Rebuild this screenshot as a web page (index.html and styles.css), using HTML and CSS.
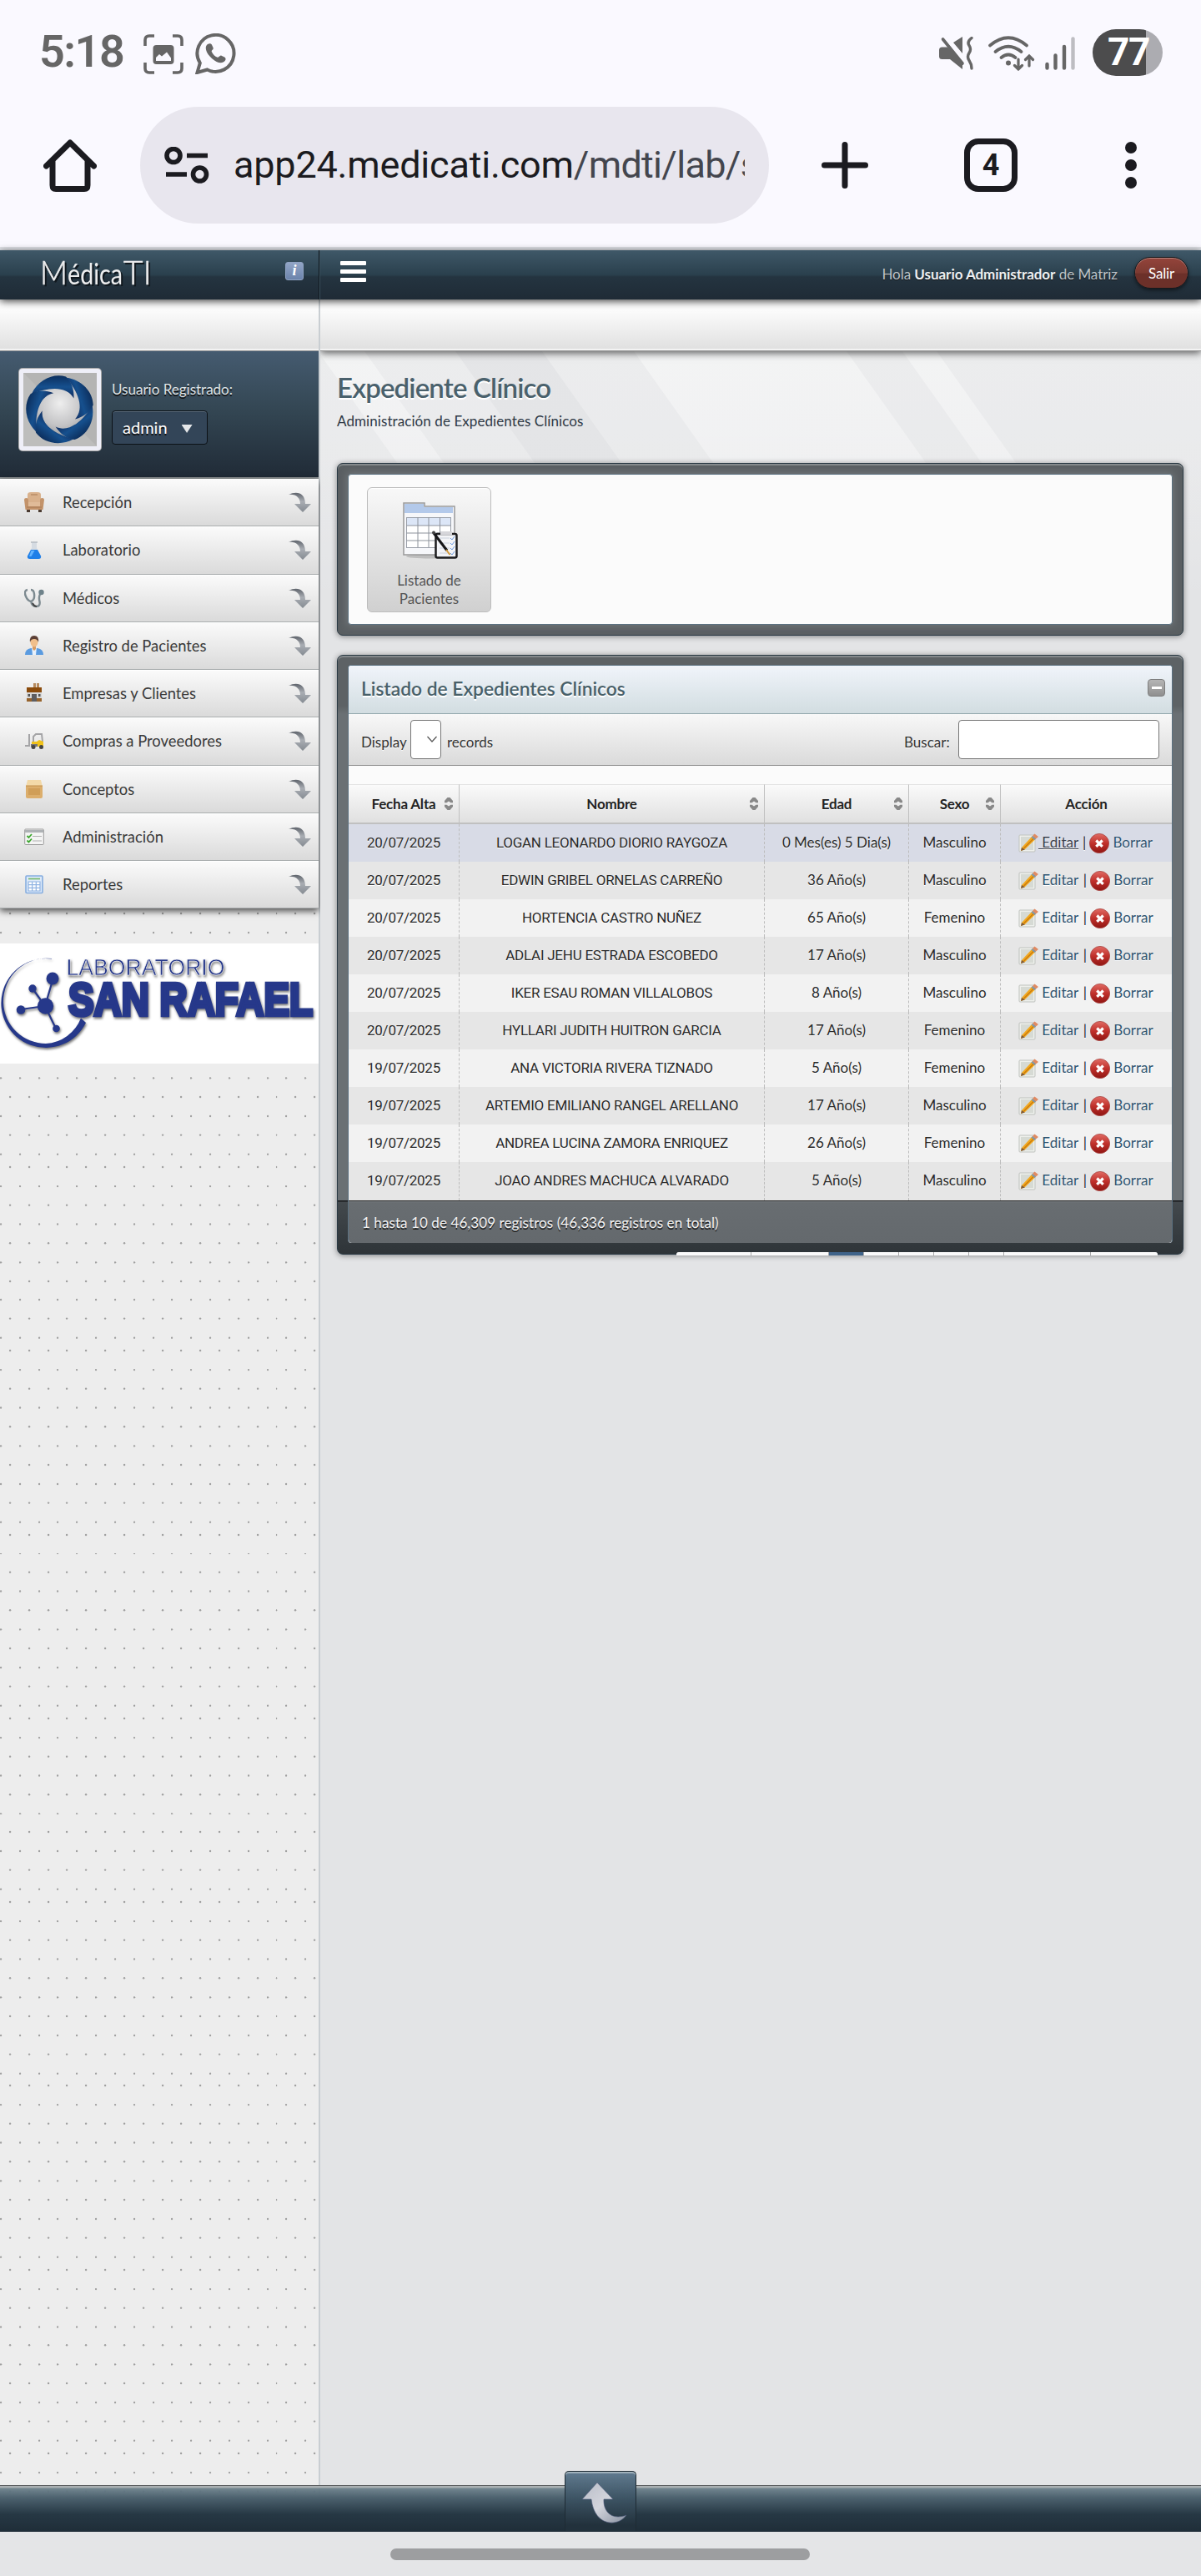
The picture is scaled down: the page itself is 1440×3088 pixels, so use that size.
FILE: index.html
```html
<!DOCTYPE html>
<html lang="es">
<head>
<meta charset="utf-8">
<title>MédicaTI</title>
<link rel="stylesheet" href="styles.css">
</head>
<body>
<svg class="defs" width="0" height="0" aria-hidden="true">
  <defs>
    <linearGradient id="gArrow" x1="0" y1="0" x2="0" y2="1"><stop offset="0" stop-color="#5f646c"/><stop offset=".45" stop-color="#a9adb3"/><stop offset="1" stop-color="#858b92"/></linearGradient>
    <linearGradient id="gBlue" x1="0" y1="0" x2="0" y2="1"><stop offset="0" stop-color="#0c2f5e"/><stop offset=".5" stop-color="#16508e"/><stop offset="1" stop-color="#102d60"/></linearGradient>
    <radialGradient id="gOrb" cx=".5" cy=".4" r=".6"><stop offset="0" stop-color="#eee"/><stop offset=".6" stop-color="#c3c3c5"/><stop offset="1" stop-color="#8f9092"/></radialGradient>
    <linearGradient id="gRed" x1="0" y1="0" x2="0" y2="1"><stop offset="0" stop-color="#e06b64"/><stop offset=".5" stop-color="#c0302b"/><stop offset="1" stop-color="#8f1512"/></linearGradient>
    <linearGradient id="gUp" x1="0" y1="0" x2="1" y2="1"><stop offset="0" stop-color="#b9bdc8"/><stop offset=".5" stop-color="#d3d5dc"/><stop offset="1" stop-color="#8890a0"/></linearGradient>
    <symbol id="down" viewBox="0 0 27 24"><path d="M0 3C10-2 20 1 20 14h7L17 24 7 14h7C14 7 9 2 0 3z" fill="url(#gArrow)"/></symbol>
    <symbol id="sort" viewBox="0 0 10 15"><path d="M0 6.300V4L3.500 0h3L10 4v2.300H7.500L5 4.600 2.500 6.300zM0 8.700V11l3.500 4h3L10 11V8.700H7.500L5 10.400 2.500 8.700z" fill="#888"/></symbol>
    <symbol id="edit" viewBox="0 0 24 24"><rect x="1" y="2" width="19" height="20" rx="1" fill="#eef0ec" stroke="#bfc2be"/><rect x="3" y="4" width="15" height="16" fill="#d6dad4"/><path d="M4 17L17 3l4 3.500L8 19l-5 2z" fill="#f2a81d"/><path d="M6.500 18L19.500 5" stroke="#c97a10" stroke-width="1.200"/><path d="M3 21l1-4 4 2.500z" fill="#7d5a3a"/><path d="M17 3l2.500-2.500L24 4l-3 2.500z" fill="#e08a62"/><path d="M15.500 4.500L17 3l4 3.500-1.500 1.500z" fill="#7f96ac"/></symbol>
    <symbol id="del" viewBox="0 0 24 24"><circle cx="12" cy="12" r="11.600" fill="url(#gRed)" stroke="#a84440" stroke-width=".8"/><path d="M8.300 8.500l7.400 7.400m0-7.400l-7.400 7.400" stroke="#fff" stroke-width="3.200"/></symbol>
  </defs>
</svg>

<header class="status">
  <span class="clock">5:18</span>
  <svg class="s-shot" viewBox="0 0 48 48" width="48" height="48"><path d="M2 14V7q0-5 5-5h6M35 2h6q5 0 5 5v7M46 34v7q0 5-5 5h-6M13 46H7q-5 0-5-5v-7" fill="none" stroke="#666" stroke-width="3.600"/><rect x="11.500" y="13" width="25" height="23" rx="4" fill="#666"/><path d="M15 32v-4l4-4 3 2.500 6-5 5 7v3.500z" fill="#faf9ff"/></svg>
  <svg class="s-wa" viewBox="0 0 49 49" width="49" height="49"><path d="M2.500 47l3.300-11.500A22 22 0 1 1 14.500 43.500z" fill="none" stroke="#666" stroke-width="4"/><path d="M16.500 12.500c-5 1-5.500 8 1.500 15.500s14.500 9.500 18 4.500c.8-1.500.8-3-.8-4l-3.700-1.800c-1.800-.6-2.800 2.600-4.800 2-3.200-1.300-6-4.300-7-7-.3-1.700 2.800-2 1.900-4.500l-1.700-3.700c-.7-1-2-1.400-3.400-1z" fill="#666"/></svg>
  <span class="spacer"></span>
  <svg class="s-mute" viewBox="0 0 42 40" width="42" height="40"><path d="M28 0v20L17 7zM0 16q0-3.500 3.500-3.500H10L28 30v9L13 27H3.500Q0 27 0 23.500z" fill="#666"/><path d="M4.500 3L28 32" stroke="#666" stroke-width="3.600" stroke-linecap="round"/><path d="M12 6.500l18 22" stroke="#faf9ff" stroke-width="2.400"/><path d="M39 1.500q-6 4.500-3 9t0 9 0 9 3 9.500" fill="none" stroke="#666" stroke-width="3.400" stroke-linecap="round"/></svg>
  <svg class="s-wifi" viewBox="0 0 56 42" width="56" height="42"><g fill="none" stroke="#666" stroke-width="3.700" stroke-linecap="round"><path d="M2 11.500Q24-7 46 11.500M8.500 19Q24 6.500 39.500 19M15.500 26Q24 19 32.500 26"/><path d="M36 28v12m-4.500-4.500L36 40l4.500-4.500M49 36V24m-4.500 4.500L49 24l4.500 4.500" stroke-width="3.200"/></g><circle cx="24" cy="32.500" r="3" fill="#666"/></svg>
  <svg class="s-sig" viewBox="0 0 36 40" width="36" height="40"><g stroke-width="4.400" stroke-linecap="round" stroke="#666"><path d="M2.500 33v4.500M12.500 22.500v15M23 12v25.500"/><path d="M33.500 2.500v35" stroke="#bdbdc2"/></g></svg>
  <span class="battery">77</span>
</header>

<div class="browser">
  <svg class="b-home" viewBox="0 0 64 64" width="64" height="64"><path d="M3.500 33L32 5l28.500 28M11 27v29q0 4.500 4 4.500h34q4 0 4-4.500V27" fill="none" stroke="#1b1b20" stroke-width="7" stroke-linejoin="round" stroke-linecap="round"/></svg>
  <div class="url">
    <svg viewBox="0 0 54 44" width="54" height="44"><g fill="none" stroke="#1b1b20" stroke-width="5.600"><circle cx="11" cy="10.500" r="8"/><circle cx="42.500" cy="33" r="8"/><path d="M27 10.500h25M2 33h25"/></g></svg>
    <span class="address">app24.medicati.com<i>/mdti/lab/s</i></span>
  </div>
  <svg class="b-plus" viewBox="0 0 56 56" width="56" height="56"><path d="M28 3.500v49M3.500 28h49" stroke="#1b1b20" stroke-width="7" stroke-linecap="round"/></svg>
  <span class="tabs">4</span>
  <svg class="b-dots" viewBox="0 0 14 56" width="14" height="56"><g fill="#1b1b20"><circle cx="7" cy="7" r="7"/><circle cx="7" cy="28" r="7"/><circle cx="7" cy="49" r="7"/></g></svg>
</div>

<div class="app">
  <div class="topbar">
    <div class="brand">
      <svg class="wordmark" viewBox="0 0 134 36" width="134" height="36"><g class="wm"><text class="thin" x="-1" y="28" font-size="40" textLength="33" lengthAdjust="spacingAndGlyphs">M</text><text x="32" y="28" font-size="34" textLength="66" lengthAdjust="spacingAndGlyphs">édica</text><text class="thin" x="99" y="28" font-size="40" textLength="34" lengthAdjust="spacingAndGlyphs">TI</text></g></svg>
      <span class="info">i</span>
    </div>
    <div class="topmain">
      <span class="burger"><b></b><b></b><b></b></span>
      <span class="hello">Hola <strong>Usuario Administrador</strong> de Matriz</span>
      <span class="exit">Salir</span>
    </div>
  </div>

  <div class="columns">
    <aside class="side">
      <div class="strip"></div>
      <div class="user">
        <svg class="avatar" viewBox="0 0 88 88" width="88" height="88"><rect width="88" height="88" fill="#b4b4b3"/><path d="M0 0l88 88H0z" fill="#bdbdbc"/><circle cx="44" cy="44" r="37" fill="url(#gOrb)"/>
          <g fill="url(#gBlue)">
            <path id="bl" d="M10 25C18 8 36 0 51 4.500c7 6 10 16 9.500 26C52 15 30 17 10 25z"/>
            <use href="#bl" transform="rotate(72 44 44)"/><use href="#bl" transform="rotate(144 44 44)"/><use href="#bl" transform="rotate(216 44 44)"/><use href="#bl" transform="rotate(288 44 44)"/>
          </g></svg>
        <div class="who"><span>Usuario Registrado:</span><div class="admin">admin<i></i></div></div>
      </div>
      <ul class="menu">
        <li><svg viewBox="0 0 24 24"><path d="M3 21h4v3H3zM17 21h4v3h-4z" fill="#4a3a30"/><path d="M4 3q0-3 4-3h8q4 0 4 3v9H4z" fill="#d9b18c"/><path d="M0 9q0-2 2.500-2T5 10v5h14v-5q0-3 2.500-3T24 9l-1.500 12h-21z" fill="#c3936a"/><path d="M5 12h14v5H5z" fill="#e0bb98"/><path d="M8 3h8M3 18h18" stroke="#a87a55" fill="none"/></svg>Recepción<svg class="go"><use href="#down"/></svg></li>
        <li><svg viewBox="0 0 24 24"><path d="M9 3h6v7l5 9q1 4-3 4H7q-4 0-3-4l5-9z" fill="#d5dbe2"/><path d="M8 12h8l4 7.500q.8 3.500-3 3.500H7q-3.800 0-3-3.500z" fill="#1f7fe8"/><path d="M8.500 13h4l-4 7H6z" fill="#63b4ff"/><path d="M8 3h8" stroke="#b5bbc2" stroke-width="1.500"/></svg>Laboratorio<svg class="go"><use href="#down"/></svg></li>
        <li><svg viewBox="0 0 24 24"><path d="M4 2Q-1 3 2 10q2 5 6 6 5-2 4-9-.5-5-4-5M8 15q1 7 6.500 7 5 0 4-6-2-8 3-11" fill="none" stroke="#7d8a90" stroke-width="2.400"/><circle cx="20.500" cy="5" r="3.200" fill="#6e828a"/><path d="M10 18q2 4 5 4" stroke="#444" stroke-width="2" fill="none"/></svg>Médicos<svg class="go"><use href="#down"/></svg></li>
        <li><svg viewBox="0 0 24 24"><path d="M1 23q0-7 7-8h8q7 1 7 8z" fill="#5a9be0"/><path d="M9 14h6l-1 9h-4z" fill="#e8f1fb"/><path d="M10 11h4v5l-2 2-2-2z" fill="#d69a63"/><ellipse cx="12" cy="7.500" rx="4.500" ry="6" fill="#f0bf8c"/><path d="M7 8q-1-8 5-8t5 8q-1-4-5-4T7 8z" fill="#5b3f35"/></svg>Registro de Pacientes<svg class="go"><use href="#down"/></svg></li>
        <li><svg viewBox="0 0 24 24"><path d="M11 0h3v6h-3zM15 0h3v6h-3z" fill="#b58a5e"/><path d="M3 5h18v6H3z" fill="#8a4b0c"/><path d="M3 11h18v11H3z" fill="#d8d8d8"/><path d="M3 18h18v4H3z" fill="#96632c"/><path d="M9 13h6v9H9z" fill="#5d5d60"/><path d="M4.500 13H7v3H4.500zM17 13h2.500v3H17z" fill="#555"/></svg>Empresas y Clientes<svg class="go"><use href="#down"/></svg></li>
        <li><svg viewBox="0 0 24 24"><path d="M6 4v14H1M11 14V7l3-3h7l1 9" fill="none" stroke="#a4a4a6" stroke-width="2"/><path d="M9 13h6l3-2 5 2v6H9z" fill="#f0c21a"/><path d="M8 16h8v3H8z" fill="#777"/><circle cx="11" cy="19.500" r="2.500" fill="#444"/><circle cx="20.500" cy="19.500" r="2.500" fill="#444"/></svg>Compras a Proveedores<svg class="go"><use href="#down"/></svg></li>
        <li><svg viewBox="0 0 24 24"><path d="M4 1h16l2 8H2z" fill="#f3d9a8"/><path d="M2 8h20v13q0 2-2 2H4q-2 0-2-2z" fill="#dcae6c"/><path d="M5 11h14v8H5z" fill="#d09e58"/><path d="M2 8h20" stroke="#c08f4c"/></svg>Conceptos<svg class="go"><use href="#down"/></svg></li>
        <li><svg viewBox="0 0 24 24"><rect x=".7" y="3" width="22.600" height="18.500" rx="1" fill="#f4f4f4" stroke="#999"/><path d="M1 4h22v3H1z" fill="#aeb2b5"/><path d="M3.500 11l2 2 3.500-4M3.500 16.500l2 2L9 14.500" stroke="#3aa62c" stroke-width="1.800" fill="none"/><path d="M10 11.500h11M10 17h11" stroke="#b0b0b0" stroke-width="1.200"/></svg>Administración<svg class="go"><use href="#down"/></svg></li>
        <li><svg viewBox="0 0 24 24"><rect x="2" y="2" width="20" height="20.500" rx="1" fill="#dce9f9" stroke="#85addf" stroke-width="1.600"/><path d="M5 5.500h14" stroke="#74b86a" stroke-width="1.600"/><path d="M5 9h14v11H5z" fill="#fff"/><path d="M5 9h14v11H5zM5 12.600h14M5 16.300h14M9.600 9v11M14.300 9v11" stroke="#8fb3e2" stroke-width="1.200" fill="none"/></svg>Reportes<svg class="go"><use href="#down"/></svg></li>
      </ul>
      <div class="lab">
        <svg viewBox="0 0 382 144" width="382" height="144">
          <g class="labshadow" fill="#26388a">
            <path d="M62 18.500A53.500 53.500 0 1 0 103 95l-6-5.500A48 48 0 0 1 55 120 51 51 0 0 1 4 71 52 52 0 0 1 62 18z"/>
            <path d="M54 75L39 54M54 75l10-34M54 75l-29 4M54 75l13 27" stroke="#26388a" stroke-width="2.200"/>
            <circle cx="54.500" cy="75" r="9.700"/><circle cx="63" cy="42" r="7.500"/><circle cx="39" cy="54" r="4.700"/><circle cx="25" cy="79.500" r="5.300"/><circle cx="67.500" cy="102" r="4.300"/>
            <text class="lab1" x="79.500" y="38" font-size="27" textLength="190" lengthAdjust="spacingAndGlyphs">LABORATORIO</text>
            <text class="lab2" x="82" y="85.500" font-size="55" textLength="293" lengthAdjust="spacingAndGlyphs">SAN RAFAEL</text>
          </g>
        </svg>
      </div>
    </aside>

    <main class="main">
      <div class="strip"></div>
      <svg class="rays" viewBox="0 0 1056 300" width="1056" height="300" preserveAspectRatio="none"><defs><linearGradient id="fade" gradientUnits="userSpaceOnUse" x1="0" y1="0" x2="0" y2="300"><stop offset="0" stop-color="#fff" stop-opacity=".55"/><stop offset=".4" stop-color="#fff" stop-opacity=".45"/><stop offset="1" stop-color="#fff" stop-opacity="0"/></linearGradient></defs>
        <g fill="url(#fade)"><path d="M0 0H162L375 300H0z" opacity=".5"/><path d="M0 0H53L266 300H210L0 4z" opacity=".7"/><path d="M266 0H1056V300H479z" opacity=".5"/><path d="M376 0H631L844 300H589zM698 0H739L952 300H911z" opacity=".7"/></g></svg>
      <div class="heading"><h1>Expediente Clínico</h1><p>Administración de Expedientes Clínicos</p></div>

      <section class="panel shortcuts"><div class="inner">
        <div class="tile">
          <svg viewBox="0 0 66 68" width="66" height="68"><ellipse cx="34" cy="65" rx="30" ry="2.500" fill="#999" opacity=".5"/><path d="M1 1h25v4h36v58H1z" fill="#f6f7fa" stroke="#999" stroke-width="1.500"/><path d="M2 2h23v4h35v7H2z" fill="#b3c9ea"/><rect x="4.500" y="18.500" width="53" height="36" fill="#fff" stroke="#9a9fa8"/><rect x="5" y="19" width="52" height="9" fill="#dce6f7"/><path d="M4.500 28h53M4.500 37h53M4.500 46h53M18 18v36M31 18v36M44.500 18v36" stroke="#8d929b"/><rect x="39.500" y="38" width="25" height="28.500" rx="2" fill="#f3f4f7" stroke="#1c1c1e" stroke-width="2.500"/><path d="M45 35h14v4H45z" fill="#d6d6da"/><path d="M44 43h12M44 49h12M44 55h12M44 61h12" stroke="#ccd2dd"/><path d="M57 43l2 2 3-4M57 49l2 2 3-4M57 55l2 2 3-4M57 61l2 2 3-4" fill="none" stroke="#6c9be0"/><path d="M37 37l16 21" stroke="#161618" stroke-width="3"/><path d="M52 57l4.500 6" stroke="#d39a3e" stroke-width="2"/><circle cx="37" cy="36.500" r="2" fill="#444"/></svg>
          <span>Listado de<br>Pacientes</span>
        </div>
      </div></section>

      <section class="panel list"><div class="inner">
        <div class="bar"><h2>Listado de Expedientes Clínicos</h2><span class="min"></span></div>
        <div class="tools">
          <span class="t1">Display</span><span class="select"><svg viewBox="0 0 12 8" width="12" height="8"><path d="M.5 1L6 7l5.500-6" fill="none" stroke="#555" stroke-width="1.200"/></svg></span><span class="t2">records</span>
          <span class="spacer"></span><span class="t3">Buscar:</span><span class="search"></span>
        </div>
        <table>
          <colgroup><col class="c1"><col class="c2"><col class="c3"><col class="c4"><col class="c5"></colgroup>
          <thead><tr><th>Fecha Alta<svg><use href="#sort"/></svg></th><th>Nombre<svg><use href="#sort"/></svg></th><th>Edad<svg><use href="#sort"/></svg></th><th>Sexo<svg><use href="#sort"/></svg></th><th>Acción</th></tr></thead>
          <tbody>
            <tr class="on"><td>20/07/2025</td><td>LOGAN LEONARDO DIORIO RAYGOZA</td><td>0 Mes(es) 5 Dia(s)</td><td>Masculino</td><td><div class="act"><svg><use href="#edit"/></svg><a>&nbsp;Editar</a><b>|</b><svg><use href="#del"/></svg><a>&nbsp;Borrar</a></div></td></tr>
            <tr><td>20/07/2025</td><td>EDWIN GRIBEL ORNELAS CARREÑO</td><td>36 Año(s)</td><td>Masculino</td><td><div class="act"><svg><use href="#edit"/></svg><a>&nbsp;Editar</a><b>|</b><svg><use href="#del"/></svg><a>&nbsp;Borrar</a></div></td></tr>
            <tr><td>20/07/2025</td><td>HORTENCIA CASTRO NUÑEZ</td><td>65 Año(s)</td><td>Femenino</td><td><div class="act"><svg><use href="#edit"/></svg><a>&nbsp;Editar</a><b>|</b><svg><use href="#del"/></svg><a>&nbsp;Borrar</a></div></td></tr>
            <tr><td>20/07/2025</td><td>ADLAI JEHU ESTRADA ESCOBEDO</td><td>17 Año(s)</td><td>Masculino</td><td><div class="act"><svg><use href="#edit"/></svg><a>&nbsp;Editar</a><b>|</b><svg><use href="#del"/></svg><a>&nbsp;Borrar</a></div></td></tr>
            <tr><td>20/07/2025</td><td>IKER ESAU ROMAN VILLALOBOS</td><td>8 Año(s)</td><td>Masculino</td><td><div class="act"><svg><use href="#edit"/></svg><a>&nbsp;Editar</a><b>|</b><svg><use href="#del"/></svg><a>&nbsp;Borrar</a></div></td></tr>
            <tr><td>20/07/2025</td><td>HYLLARI JUDITH HUITRON GARCIA</td><td>17 Año(s)</td><td>Femenino</td><td><div class="act"><svg><use href="#edit"/></svg><a>&nbsp;Editar</a><b>|</b><svg><use href="#del"/></svg><a>&nbsp;Borrar</a></div></td></tr>
            <tr><td>19/07/2025</td><td>ANA VICTORIA RIVERA TIZNADO</td><td>5 Año(s)</td><td>Femenino</td><td><div class="act"><svg><use href="#edit"/></svg><a>&nbsp;Editar</a><b>|</b><svg><use href="#del"/></svg><a>&nbsp;Borrar</a></div></td></tr>
            <tr><td>19/07/2025</td><td>ARTEMIO EMILIANO RANGEL ARELLANO</td><td>17 Año(s)</td><td>Masculino</td><td><div class="act"><svg><use href="#edit"/></svg><a>&nbsp;Editar</a><b>|</b><svg><use href="#del"/></svg><a>&nbsp;Borrar</a></div></td></tr>
            <tr><td>19/07/2025</td><td>ANDREA LUCINA ZAMORA ENRIQUEZ</td><td>26 Año(s)</td><td>Femenino</td><td><div class="act"><svg><use href="#edit"/></svg><a>&nbsp;Editar</a><b>|</b><svg><use href="#del"/></svg><a>&nbsp;Borrar</a></div></td></tr>
            <tr><td>19/07/2025</td><td>JOAO ANDRES MACHUCA ALVARADO</td><td>5 Año(s)</td><td>Masculino</td><td><div class="act"><svg><use href="#edit"/></svg><a>&nbsp;Editar</a><b>|</b><svg><use href="#del"/></svg><a>&nbsp;Borrar</a></div></td></tr>
          </tbody>
        </table>
        <div class="count">1 hasta 10 de 46,309 registros (46,336 registros en total)</div>
      </div>
      <div class="pager"><i></i><i></i><i class="cur"></i><i></i><i></i><i></i><i></i><i></i><i></i></div>
      </section>
    </main>
  </div>

  <div class="bottombar"><span class="totop"><svg viewBox="0 0 56 56" width="56" height="56"><path d="M20 3L39 23H28C27 36 36 49 55 42 46 56 17 57 13 23H2z" fill="url(#gUp)" stroke="#4b5878" stroke-width=".6"/></svg></span></div>
</div>
<div class="navbar"><span></span></div>
</body>
</html>
```
FILE: styles.css
```css
* { box-sizing: border-box; }
body { margin: 0; width: 1440px; height: 3088px; overflow: hidden; background: #e4e5e7; font: 17px/22px Lato, "Liberation Sans", sans-serif; color: #222; }
i { font-style: normal; }
.defs { position: absolute; }
.spacer { flex: 1; }

/* phone status bar */
.status { display: flex; height: 126px; padding: 35px 46px 0 47px; background: #faf9ff; }
.status svg { flex: none; }
.clock { width: 125px; font: 600 54px/54px Roboto, sans-serif; letter-spacing: -1.500px; color: #666; white-space: nowrap; }
.s-shot { margin-top: 6px; }
.s-wa { margin: 5px 0 0 14px; }
.s-mute { margin: 9px 17px 0 0; }
.s-wifi { margin: 8px 12px 0 0; }
.s-sig { margin: 9px 21px 0 0; }
.battery { width: 84px; height: 56px; border-radius: 28px; background: linear-gradient(90deg, #4c4c4d 64px, #acacb1 64px); color: #fff; font: 700 46px/55px Roboto, sans-serif; letter-spacing: -1.500px; padding-left: 18px; }

/* browser toolbar */
.browser { display: flex; align-items: flex-start; height: 174px; padding: 40px 77px 0 52px; background: #faf9ff; border-bottom: 4px solid #e1e3e8; }
.browser svg { flex: none; }
.url { display: flex; width: 754px; height: 140px; margin: -38px 63px 0 52px; border-radius: 70px; background: #e8e6ee; padding: 48px 28px 0 29px; }
.address { width: 613px; margin-left: 29px; overflow: hidden; white-space: nowrap; font: 400 45px/56px Roboto, sans-serif; letter-spacing: -.2px; color: #1b1b20; margin-top: -6px; }
.address i { color: #44464e; letter-spacing: -.7px; }
.b-plus { margin-top: 4px; }
.tabs { width: 64px; height: 64px; margin-left: 115px; border: 7px solid #1b1b20; border-radius: 17px; font: 700 36px/51px Roboto, sans-serif; text-align: center; color: #1b1b20; }
.b-dots { margin: 4px 0 0 129px; }

/* application frame */
.app { position: relative; height: 2735px; }
.topbar { position: relative; z-index: 2; display: flex; height: 59px; background: linear-gradient(#3f5868, #2a404d 50%, #243440 54%, #1f2b36); box-shadow: 0 2px 9px rgba(0, 0, 0, .75); }
.brand { display: flex; width: 382px; }
.wordmark { margin: 13px 0 0 49px; overflow: visible; }
.wm { font-family: Lato, sans-serif; fill: #ededee; filter: drop-shadow(2px 2px 0 #11181e); }
.thin { font-weight: 300; stroke: #ededee; stroke-width: .5px; }
.info { width: 22px; height: 22px; margin: 14px 0 0 159px; border-radius: 3px; border: 1px solid #8fa2c2; background: linear-gradient(#92a5c6, #6b83ab); color: #fff; text-align: center; font: italic bold 18px/19px "Liberation Serif", serif; }
.topmain { flex: 1; display: flex; border-left: 1px solid #0e161c; box-shadow: inset 1px 0 #3d5260; padding-left: 25px; }
.burger { display: flex; flex-direction: column; gap: 5px; padding-top: 13px; width: 31px; }
.burger b { height: 5px; border-radius: 1px; background: #fff; }
.hello { margin: 17px 20px 0 auto; line-height: 24px; letter-spacing: -.05px; color: #bcc4ca; text-shadow: 0 1px #111; }
.hello strong { color: #eef1f3; }
.exit { width: 65px; height: 38px; margin: 8px 15px 0 0; border: 1px solid #17191c; border-radius: 19px; background: linear-gradient(#94443b, #7c3a31 50%, #6c3029 54%); box-shadow: inset 0 1px #b9837d, 0 2px 4px rgba(0, 0, 0, .5); color: #fff; text-align: center; line-height: 38px; letter-spacing: -.2px; }
.columns { display: grid; grid-template-columns: 384px 1056px; height: 2676px; }
.strip { height: 62px; background: linear-gradient(#fcfcfc 20%, #dfdfdf); border-bottom: 1px solid #999; box-shadow: inset 0 -2px #f3f3f3; }

/* sidebar */
.side { border-right: 2px solid #c9ced2; background: #ededed url("data:image/svg+xml,%3Csvg xmlns='http://www.w3.org/2000/svg' width='22.83' height='220.3'%3E%3Cg fill='%23a0a0a0'%3E%3Ccircle cx='12' cy='2' r='1.200'/%3E%3Ccircle cx='1' cy='25' r='1.200'/%3E%3Ccircle cx='12' cy='47.500' r='1.200'/%3E%3Ccircle cx='1' cy='70.300' r='1.200'/%3E%3Ccircle cx='12' cy='93' r='1.200'/%3E%3Ccircle cx='1' cy='116' r='1.200'/%3E%3Ccircle cx='12' cy='138.500' r='1.200'/%3E%3Ccircle cx='1' cy='161.500' r='1.200'/%3E%3Ccircle cx='12' cy='184' r='1.200'/%3E%3Ccircle cx='1' cy='207' r='1.200'/%3E%3C/g%3E%3C/svg%3E") 0 156.8px; }
.user { display: flex; height: 153px; padding: 21px 23px 0; background: linear-gradient(#455b70, #344754 45%, #202b37); border-bottom: 2px solid #8f9496; }
.avatar { flex: none; box-sizing: content-box; border: 5px solid #efeff8; border-radius: 4px; box-shadow: 0 0 0 1px #a8a8a8; background: #efeff8; }
.who { padding: 14px 0 0 13px; color: #dfe3e6; text-shadow: 0 2px #111; white-space: nowrap; }
.admin { display: flex; align-items: center; gap: 17px; width: 115px; height: 41px; margin-top: 14px; padding: 0 0 1px 12px; border: 1px solid #0c1116; border-radius: 4px; background: #334558; box-shadow: inset 0 1px #5a6b7c; font-size: 20px; color: #fff; }
.admin i { width: 13px; height: 10px; margin-top: 4px; background: #e5e7e9; clip-path: polygon(0 0, 100% 0, 50% 100%); }
.menu { list-style: none; margin: 0; padding: 0; height: 515px; display: grid; grid-auto-rows: 57.25px; box-shadow: 0 3px 8px rgba(0, 0, 0, .7); }
.menu li { display: flex; align-items: center; padding: 0 9px 0 29px; background: linear-gradient(#fbfbfb, #dadada); border-bottom: 1px solid #a9adae; box-shadow: inset 0 1px #fff; font-size: 18.400px; color: #3a3a3a; }
.menu li svg:first-child { width: 24px; height: 24px; margin-right: 22px; }
.menu .go { width: 27px; height: 24px; margin: 0 0 0 auto; }
.lab { height: 144px; margin-top: 42px; background: #fff; }
.labshadow { filter: drop-shadow(1.500px 2px 1.500px rgba(0, 0, 0, .55)); }
.lab1 { font-family: "Liberation Sans", sans-serif; stroke: #fff; stroke-width: .5px; }
.lab2 { font-family: "Liberation Sans", sans-serif; font-weight: 700; stroke: #26388a; stroke-width: 4.500px; }

/* main column */
.main { position: relative; background: linear-gradient(#e5e6e8, #e3e4e6 300px); clip-path: inset(0); }
.main .strip { position: relative; z-index: 1; box-shadow: inset 0 -2px #f3f3f3, 0 2px 9px rgba(0, 0, 0, .65); }
.rays { position: absolute; left: 0; top: 62px; }
.heading { position: relative; height: 134px; padding: 23px 0 0 20px; }
h1 { margin: 0; font-size: 33px; line-height: 40px; font-weight: 600; letter-spacing: -.85px; color: #4a616c; text-shadow: 0 2px #fff; }
.heading p { margin: 9px 0 0; line-height: 24px; letter-spacing: .08px; color: #2f3945; }
.panel { position: relative; width: 1015px; margin: 0 0 23px 20px; padding: 12px; border: 1px solid #2b3a45; border-radius: 7px; background: #5d6265; box-shadow: inset 0 2px #84898c, inset 0 0 12px #565b5e, 0 1px 7px rgba(0, 0, 0, .45); }
.inner { width: 989px; border: 1px solid #5b7181; border-radius: 4px; background: #fbfbfb; box-shadow: 0 0 8px #777c80; overflow: hidden; }
.shortcuts { height: 207px; }
.shortcuts .inner { height: 181px; padding: 15px 22px; }
.tile { width: 149px; height: 150px; padding-top: 17px; border: 1px solid #bcbcbc; border-radius: 6px; background: linear-gradient(#f8f8f8, #d0d0d0); box-shadow: inset 0 1px #fff; text-align: center; color: #555; }
.tile svg { display: block; margin: 0 auto 15px 42px; }
.tile span { display: block; }
.list { height: 719px; padding-top: 11px; background: linear-gradient(#5d6265 60px, #6a7074 70px, #6a7074 653px, #151719 653px, #151719 654px, #43494d 655px, #2e3438 100%); box-shadow: inset 0 2px #84898c, 0 1px 7px rgba(0, 0, 0, .45); }
.list .inner { border-width: 1px 1px 0; box-shadow: none; }
.bar { display: flex; height: 58px; padding: 15px 8px 0 15px; background: linear-gradient(#f0f4fa, #d2dde1); border-bottom: 1px solid #93a8ad; }
h2 { margin: 0; font-size: 22.800px; line-height: 24px; font-weight: 600; color: #486069; text-shadow: 0 2px #fff; }
.min { width: 21px; height: 21px; margin: 1px 0 0 auto; border: 1px solid #7d7d7d; border-radius: 4px; background: linear-gradient(#fff, #fff) center / 12px 3px no-repeat, linear-gradient(#b5b5b5, #8f8f8f); }
.tools { display: flex; height: 62px; padding: 7px 15px 0 15px; background: linear-gradient(#f8f8f8, #dadada); border-bottom: 1px solid #8e8e8e; text-shadow: 0 1px #fff; }
.tools > span:not(.select):not(.search) { padding-top: 16px; color: #333; }
.t1 { width: 59px; }
.tools .t2 { padding-left: 7px; }
.t3 { width: 65px; }
.select { width: 37px; height: 47px; border: 1px solid #767676; border-radius: 4px; background: #fff; padding: 9px 0 0 19px; }
.search { width: 241px; height: 47px; border: 1px solid #767676; border-radius: 4px; background: #fff; }
table { width: 987px; margin-top: 22px; table-layout: fixed; border-collapse: separate; border-spacing: 0; }
.c1 { width: 133px; } .c2 { width: 366px; } .c3 { width: 173px; } .c4 { width: 110px; } .c5 { width: 205px; }
th { position: relative; height: 48px; padding: 0; background: linear-gradient(#fafafa, #e0e0e0); border: solid #c0c0c0; border-width: 1px 1px 2px 0; border-top-color: #e3e3e3; font-weight: 700; letter-spacing: -.2px; text-shadow: 0 1px #fff; }
th:last-child { border-right: 0; }
th svg { position: absolute; right: 7px; top: 15px; width: 10px; height: 15px; }
td { height: 45px; padding: 0 0 2px; text-align: center; background: #e6e6e6; border-right: 1px dashed #bcbcbc; font-family: Roboto, sans-serif; letter-spacing: -.25px; text-shadow: 0 1px #fff; color: #2a2a2a; white-space: nowrap; }
td:last-child { border-right: 0; }
tr:nth-child(odd) td { background: #f2f2f2; }
tbody tr:last-child td { height: 46px; }
tbody tr.on td { background: #d8dbe6; }
td:nth-child(3), td:nth-child(4) { font-family: Lato, sans-serif; letter-spacing: 0; }
.act { display: flex; align-items: center; padding-left: 21px; font-family: Lato, sans-serif; letter-spacing: 0; }
.act svg { width: 24px; height: 24px; flex: none; position: relative; top: 1px; }
.act a { width: 50px; text-align: left; color: #2f5470; }
.act b { width: 12px; font-weight: 400; }
.on a:first-of-type { color: #3a3f4c; text-decoration: underline; width: auto; margin-right: 1px; }
.count { height: 51px; padding: 15px 16px 0; background: linear-gradient(#7a7f83, #686d71 3px, #64696d); border-radius: 0 0 4px 4px; line-height: 24px; letter-spacing: .08px; color: #f2f2f2; text-shadow: 0 2px #222; box-shadow: inset 0 1px #222; }
.pager { position: absolute; right: 30px; bottom: -2px; display: flex; height: 4px; gap: 1px; width: 577px; background: #aaa; border-radius: 3px 3px 0 0; overflow: hidden; }
.pager i { width: 41px; background: #fafafa; }
.pager i:nth-child(1) { width: 89px; }
.pager i:nth-child(2) { width: 92px; }
.pager i:nth-child(8) { width: 103px; }
.pager i:nth-child(9) { flex: 1; }
.pager .cur { background: #3f6389; }

/* footer bar overlays the end of both columns */
.bottombar { position: absolute; z-index: 3; left: 0; right: 0; bottom: 0; height: 56px; border-top: 1px solid #5c5f61; background: linear-gradient(#aab0b2 0, #aab0b2 2px, rgba(104, 125, 136, .92) 3px, #4d626f 14px, #263844 34px, #1f2d38); }
.totop { position: absolute; left: 677px; top: -18px; width: 86px; height: 72px; border: 1px solid #1e2b34; border-bottom: 0; border-radius: 5px 5px 0 0; background: linear-gradient(#617b90, #3d5464 45%, #22313c 90%); box-shadow: inset 0 2px #9fb0bb; padding: 10px 0 0 18px; }
.navbar { height: 53px; background: #e4e5e7; display: flex; justify-content: center; padding: 20px 1px 0 0; }
.navbar span { width: 503px; height: 14px; border-radius: 7px; background: #9d9ea0; }
```
